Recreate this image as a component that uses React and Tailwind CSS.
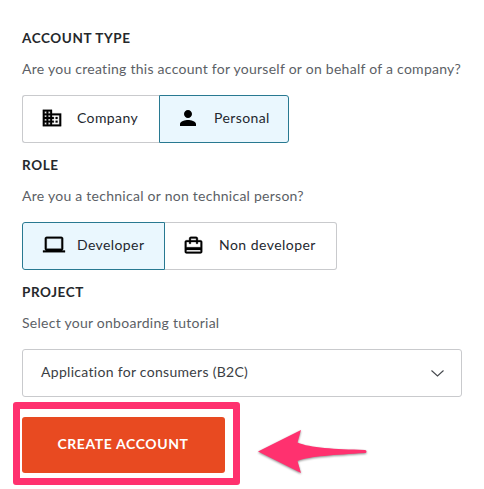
import { MdPerson } from "react-icons/md";

const BUSINESS =
  "M12 7V3H2v18h20V7H12zM6 19H4v-2h2v2zm0-4H4v-2h2v2zm0-4H4V9h2v2zm0-4H4V5h2v2zm4 12H8v-2h2v2zm0-4H8v-2h2v2zm0-4H8V9h2v2zm0-4H8V5h2v2zm10 12h-8v-2h2v-2h-2v-2h2v-2h-2V9h8v10zm-2-8h-2v2h2v-2zm0 4h-2v2h2v-2z";
const LAPTOP = "M20 18c1.1 0 2-.9 2-2V5c0-1.1-.9-2-2-2H4c-1.1 0-2 .9-2 2v11c0 1.1.9 2 2 2H0v2h24v-2h-4zM4 5h16v11H4V5z";
const CASE =
  "M20 6h-3V4c0-1.11-.89-2-2-2H9c-1.11 0-2 .89-2 2v2H4c-1.11 0-2 .89-2 2v11c0 1.11.89 2 2 2h16c1.11 0 2-.89 2-2V8c0-1.11-.89-2-2-2zM9 4h6v2H9V4zm11 15H4v-2h16v2zm0-5H4V8h3v2h2V8h6v2h2V8h3v6z";

function BoldIcon({ path, className }) {
  return (
    <svg className={className} viewBox="0 0 24 24" fill="#000" stroke="#000" strokeWidth="0.35">
      <path d={path} />
    </svg>
  );
}

function Section({ title, hint, children }) {
  return (
    <section className="h-[127px]">
      <h2 className="h-5 text-[13.5px] leading-5 font-bold tracking-[0.6px] text-[#25282c]">{title}</h2>
      <p className="mt-[11px] h-5 text-sm leading-5 tracking-[0.26px] whitespace-nowrap text-[#5c5f66]">{hint}</p>
      {children}
    </section>
  );
}

export default function App() {
  return (
    <main className="h-[489px] w-[484px] overflow-hidden bg-white pt-7 pl-[22px] font-['Lato',sans-serif]">
      <Section title="ACCOUNT TYPE" hint="Are you creating this account for yourself or on behalf of a company?">
        <div className="mt-4 flex h-12 text-sm tracking-[0.4px] text-[#24282f]">
          <button className="flex w-[137px] items-center rounded-l-[3px] border border-r-0 border-[#c9cacd] pl-[18px]">
            <BoldIcon path={BUSINESS} className="mb-[2px] size-[22px] overflow-visible" />
            <span className="ml-[14px] pb-0.5">Company</span>
          </button>
          <button className="flex w-[130px] items-center rounded-r-[3px] border border-[#287991] bg-[#eaf7fe] pl-4">
            <MdPerson className="mb-[2px] size-6 text-black" />
            <span className="ml-[14px] pb-0.5">Personal</span>
          </button>
        </div>
      </Section>

      <Section title="ROLE" hint="Are you a technical or non technical person?">
        <div className="mt-4 flex h-12 text-sm tracking-[0.4px] text-[#24282f]">
          <button className="flex w-[143px] items-center rounded-l-[3px] border border-[#287991] bg-[#eaf7fe] pl-5">
            <BoldIcon path={LAPTOP} className="mb-[2px] size-[22px] overflow-visible" />
            <span className="ml-3 pb-0.5">Developer</span>
          </button>
          <button className="flex w-[172px] items-center rounded-r-[3px] border border-l-0 border-[#c9cacd] pl-[18px] whitespace-nowrap">
            <BoldIcon path={CASE} className="mb-[2px] size-[21px] overflow-visible" />
            <span className="ml-[15px] pb-0.5 tracking-[0.46px]">Non developer</span>
          </button>
        </div>
      </Section>

      <Section title="PROJECT" hint="Select your onboarding tutorial">
        <button className="mt-4 flex h-12 w-[440px] items-center justify-between rounded-[3px] border border-[#c9cacd] pr-[17px] pl-[18px] text-sm tracking-[0.3px] text-[#3b3e44]">
          <span className="pb-0.5">Application for consumers (B2C)</span>
          <svg className="h-[7px] w-[13px]" viewBox="0 0 13 7" fill="none" stroke="#45484d" strokeWidth="1.1">
            <path d="M.5.5 6.5 6 12.5.5" />
          </svg>
        </button>
      </Section>

      <div className="mt-2 flex">
        <div className="relative h-14 w-[203px]">
          <button className="h-full w-full rounded-[3px] bg-[#e84a21] pr-px pb-[3px] text-[14px] font-bold tracking-[0.6px] text-white">CREATE ACCOUNT</button>
          <div className="absolute -top-[15px] -left-[9px] h-[83px] w-[227px] rounded-[3px] border-[7px] border-[#ff316f]" />
        </div>
        <svg className="mt-3 ml-8 h-[54px] w-[114px]" viewBox="257 429 114 54" fill="#ff316f">
          <path className="drop-shadow-[0_1px_1px_rgba(0,0,0,0.45)]" d="M258 451.5 301 430 297.5 442.5C310 448 335 449 365 450Q366.5 450 366.5 451.5T365 453C335 455 310 456 297.5 461L301 473Z" />
        </svg>
      </div>
    </main>
  );
}
